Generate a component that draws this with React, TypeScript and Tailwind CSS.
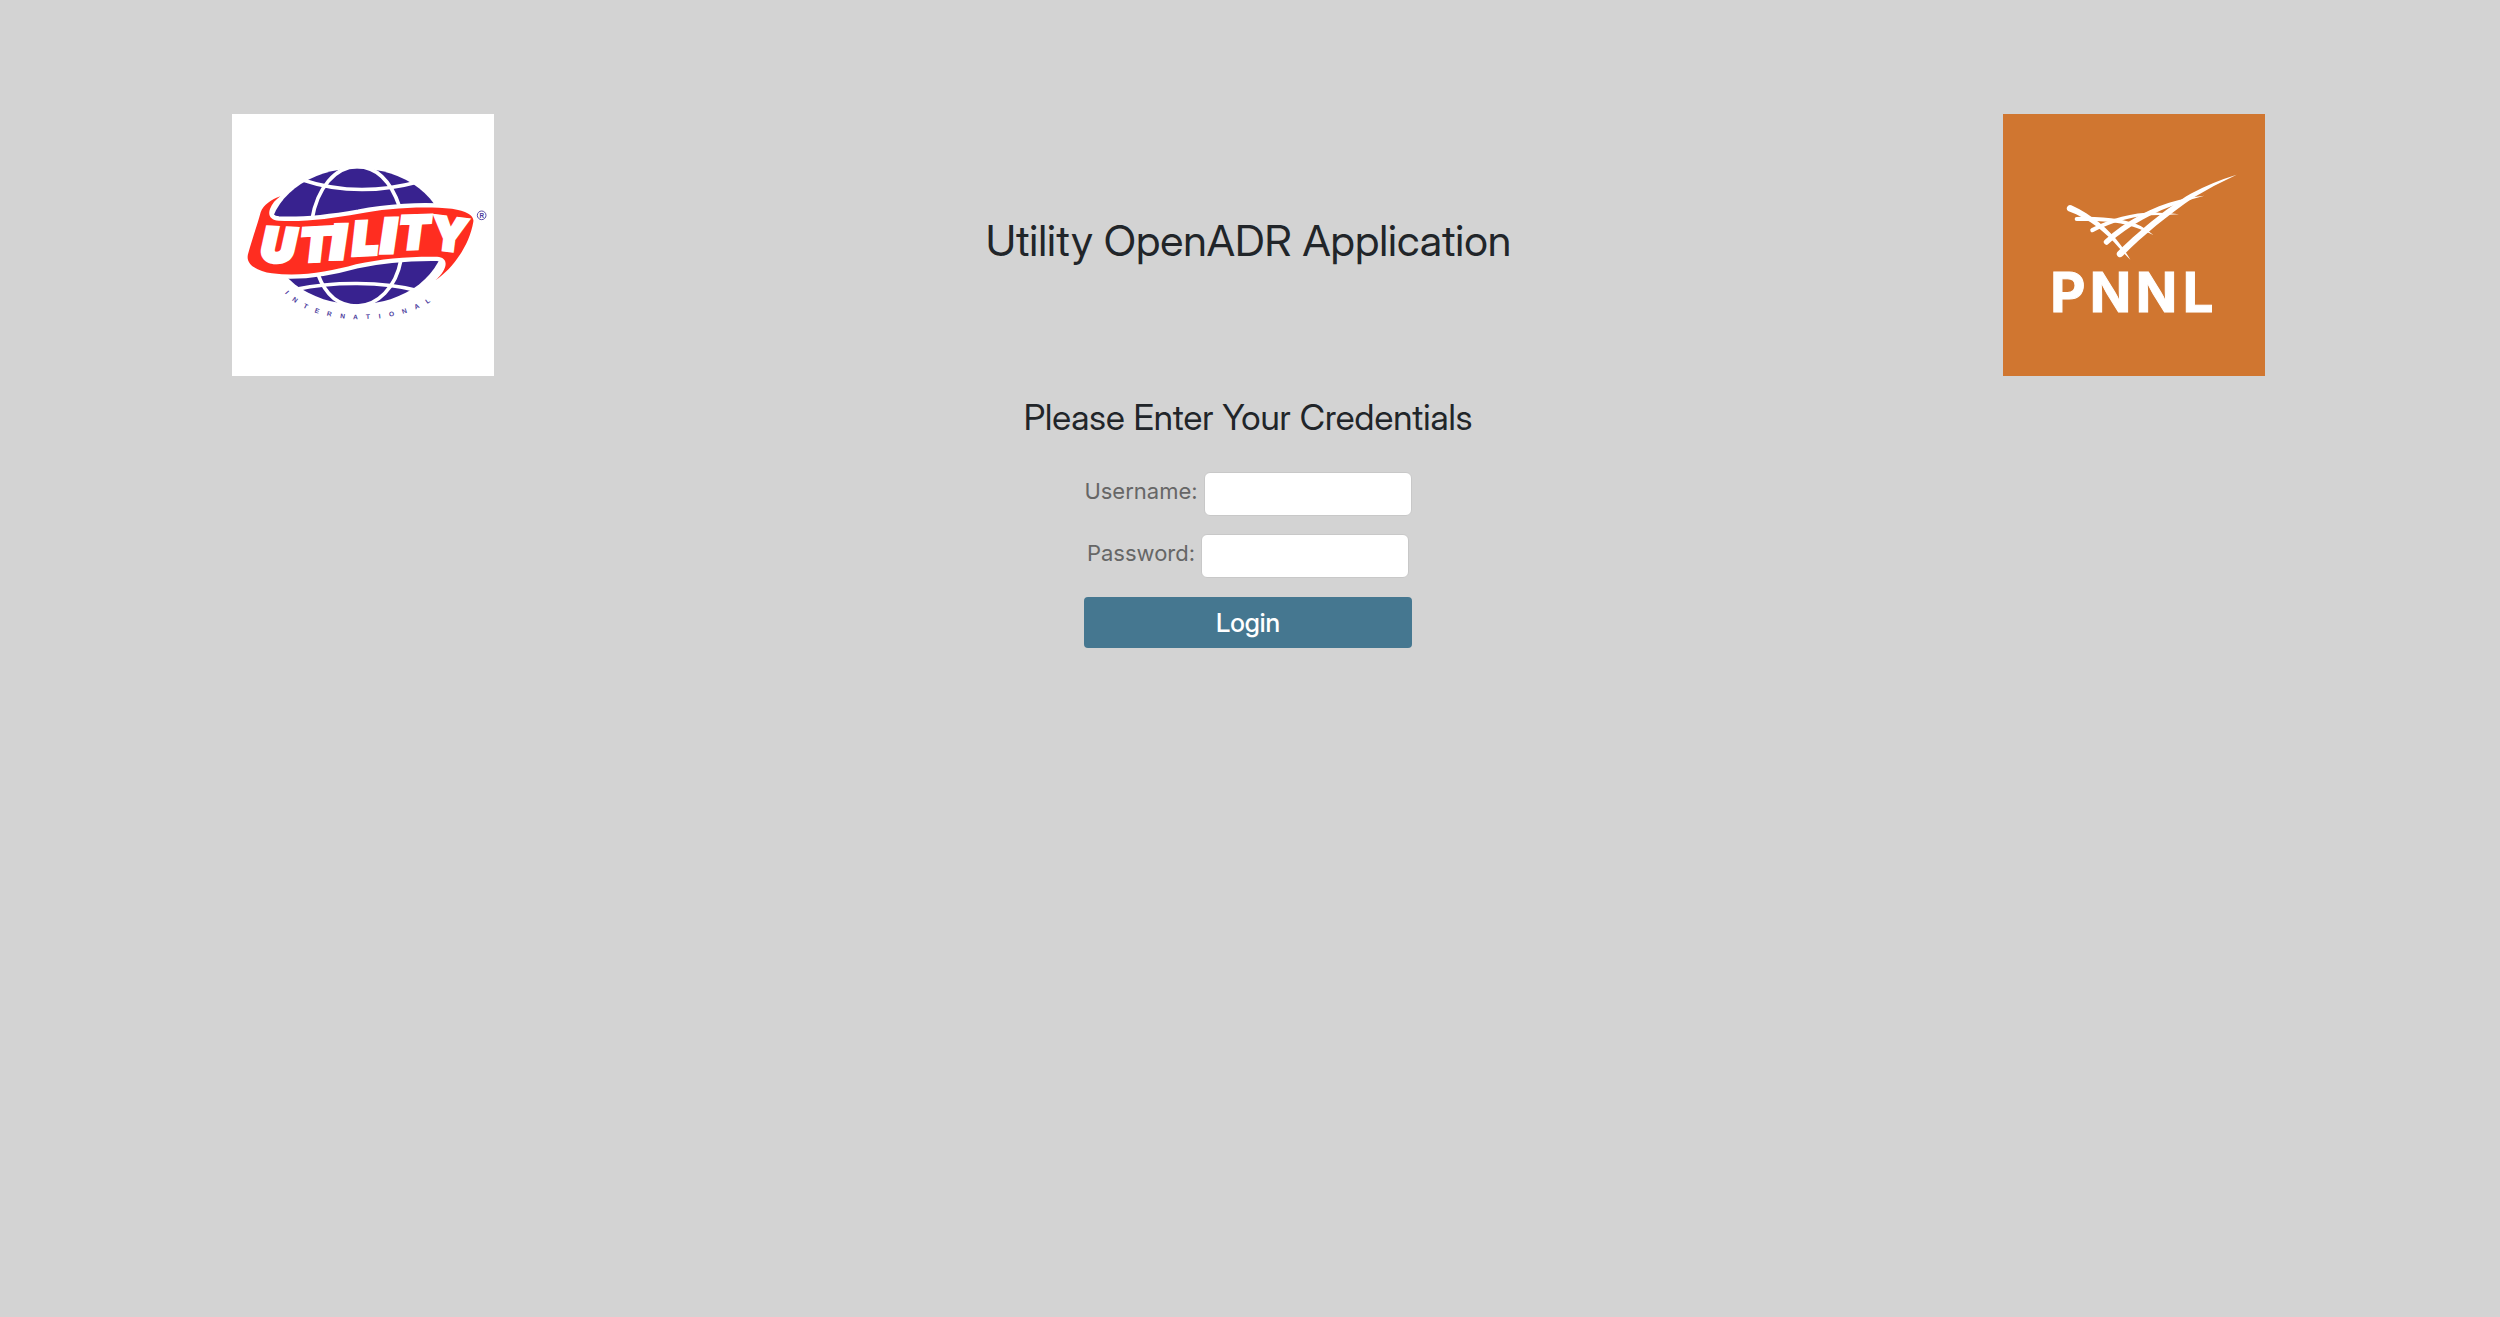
const ribbon =
  'M175 276 C148 285 124 302 116 324 C106 362 90 405 78 450 C70 480 105 500 150 507 C235 518 320 503 402 480 C480 462 560 456 645 457 C672 458 677 478 664 500 C657 512 650 519 640 528 C690 495 742 425 754 352 C757 334 735 320 690 313 C600 304 490 312 410 328 C330 342 250 353 170 349 C146 347 137 333 144 314 C150 298 161 286 175 276 Z';

const bannerLetters = [
  { char: 'U', x: 116, y: 469, angle: 3, size: 138, weight: 14, italic: true },
  { char: 'T', x: 236, y: 473, angle: -3, size: 138, weight: 10, italic: true },
  { char: 'I', x: 330, y: 461, angle: -1, size: 132, weight: 18, italic: true },
  { char: 'L', x: 394, y: 453, angle: -3, size: 136, weight: 12, italic: true },
  { char: 'I', x: 481, y: 442, angle: -1, size: 132, weight: 18, italic: true },
  { char: 'T', x: 532, y: 435, angle: -2, size: 136, weight: 10, italic: true },
  { char: 'Y', x: 625, y: 432, angle: 7, size: 136, weight: 10, italic: false },
];

const captionLetters = [
  { char: 'I', x: 195, y: 564, angle: 48 },
  { char: 'N', x: 219, y: 586, angle: 36 },
  { char: 'T', x: 251, y: 605, angle: 27 },
  { char: 'E', x: 285, y: 619, angle: 19 },
  { char: 'R', x: 322, y: 628, angle: 13 },
  { char: 'N', x: 362, y: 635, angle: 7 },
  { char: 'A', x: 400, y: 638, angle: 1 },
  { char: 'T', x: 438, y: 637, angle: -3 },
  { char: 'I', x: 473, y: 635, angle: -7 },
  { char: 'O', x: 509, y: 629, angle: -12 },
  { char: 'N', x: 547, y: 620, angle: -18 },
  { char: 'A', x: 584, y: 606, angle: -25 },
  { char: 'L', x: 617, y: 590, angle: -34 },
];

function UtilityLogo() {
  return (
    <svg viewBox="30 29 786 786" className="size-[262px] shrink-0 bg-white" role="img" aria-label="Utility International">
      <ellipse cx="405" cy="396" rx="263" ry="204" fill="#38228f" />
      <g fill="none" stroke="#fff" strokeWidth="11">
        <path d="M270 345 C286 250 340 187 405 187 C466 187 508 235 533 308" />
        <path d="M240 226 Q405 282 590 232" />
        <path d="M288 510 C310 570 350 605 405 605 C466 605 522 550 537 466" />
        <path d="M222 555 C330 532 480 530 592 560" />
      </g>
      <path d={ribbon} fill="#fff" stroke="#fff" strokeWidth="26" />
      <path d={ribbon} fill="#ff2d20" />
      <g fill="#fff" stroke="#fff" fontFamily="Inter, sans-serif" fontWeight="900">
        {bannerLetters.map((l, i) => (
          <text
            key={i}
            transform={`translate(${l.x} ${l.y}) rotate(${l.angle})`}
            fontSize={l.size}
            strokeWidth={l.weight}
            fontStyle={l.italic ? 'italic' : 'normal'}
          >
            {l.char}
          </text>
        ))}
      </g>
      <g fill="#4b3a9c" fontFamily="Liberation Sans, sans-serif" fontSize="20" fontWeight="700" textAnchor="middle">
        {captionLetters.map((l, i) => (
          <text key={i} transform={`translate(${l.x} ${l.y}) rotate(${l.angle})`} y="7">
            {l.char}
          </text>
        ))}
      </g>
      <circle cx="779" cy="333" r="13" fill="none" stroke="#5a4aa5" strokeWidth="3" />
      <text x="779" y="340" fill="#4b3a9c" fontFamily="Liberation Sans, sans-serif" fontSize="19" fontWeight="700" textAnchor="middle">
        R
      </text>
    </svg>
  );
}

function PnnlLogo() {
  return (
    <svg viewBox="32 29 786 786" className="size-[262px] shrink-0 bg-[#d07630]" role="img" aria-label="PNNL">
      <g fill="#fff">
        <path d="M237 303 C300 332 350 375 385 422 Q400 442 414 466 Q397 450 380 430 C340 385 295 345 227 320 A10 10 0 0 1 237 303 Z" />
        <path d="M253 338 C340 335 410 347 445 365 Q465 376 483 392 Q460 381 440 373 C390 353 330 349 253 350 A6 6 0 0 1 253 338 Z" />
        <path d="M297 372 C360 340 430 322 500 325 Q535 325 560 330 Q530 332 500 332 C430 332 365 350 303 383 A6 6 0 0 1 297 372 Z" />
        <path d="M337 407 C400 350 480 306 560 287 Q600 277 636 274 Q600 283 565 296 C490 320 410 362 348 419 A8 8 0 0 1 337 407 Z" />
        <path d="M375 443 C430 388 520 312 595 268 Q660 233 733 211 Q665 242 605 279 C530 330 450 395 390 456 A10 10 0 0 1 375 443 Z" />
      </g>
      <text x="174 292 430 571" y="622" fill="#fff" stroke="#fff" strokeWidth="3" fontFamily="Inter, sans-serif" fontSize="163" fontWeight="700">
        PNNL
      </text>
    </svg>
  );
}

const field =
  'h-11 w-[208px] rounded-md border border-[#c8c8c8] bg-white px-3 text-[22px] text-[#212529] outline-none focus:border-[#457790]';
const fieldLabel = 'pt-1 font-[Inter,sans-serif] text-[22px] leading-[30px] text-[#666]';

export default function App() {
  return (
    <div className="min-h-screen bg-[#d3d3d3] font-[Inter_Display,Inter,sans-serif] text-[#212529]">
      <header className="flex justify-between pt-[114px] pr-[235px] pl-[232px]">
        <UtilityLogo />
        <h1 className="pt-[100px] text-[43px] leading-[52px]">Utility OpenADR Application</h1>
        <PnnlLogo />
      </header>
      <main className="flex flex-col items-center pt-[18px] pr-1">
        <h2 className="text-[35px] leading-[46px]">Please Enter Your Credentials</h2>
        <form className="mt-8 flex flex-col items-center" onSubmit={(e) => e.preventDefault()}>
          <div className="flex gap-1.5">
            <label htmlFor="username" className={fieldLabel}>Username:</label>
            <input id="username" type="text" className={field} />
          </div>
          <div className="mt-[18px] flex gap-1.5">
            <label htmlFor="password" className={fieldLabel}>Password:</label>
            <input id="password" type="password" className={field} />
          </div>
          <button type="submit" className="mt-[19px] h-[51px] w-full rounded bg-[#457790] text-[26px] font-medium text-white">
            Login
          </button>
        </form>
      </main>
    </div>
  );
}
